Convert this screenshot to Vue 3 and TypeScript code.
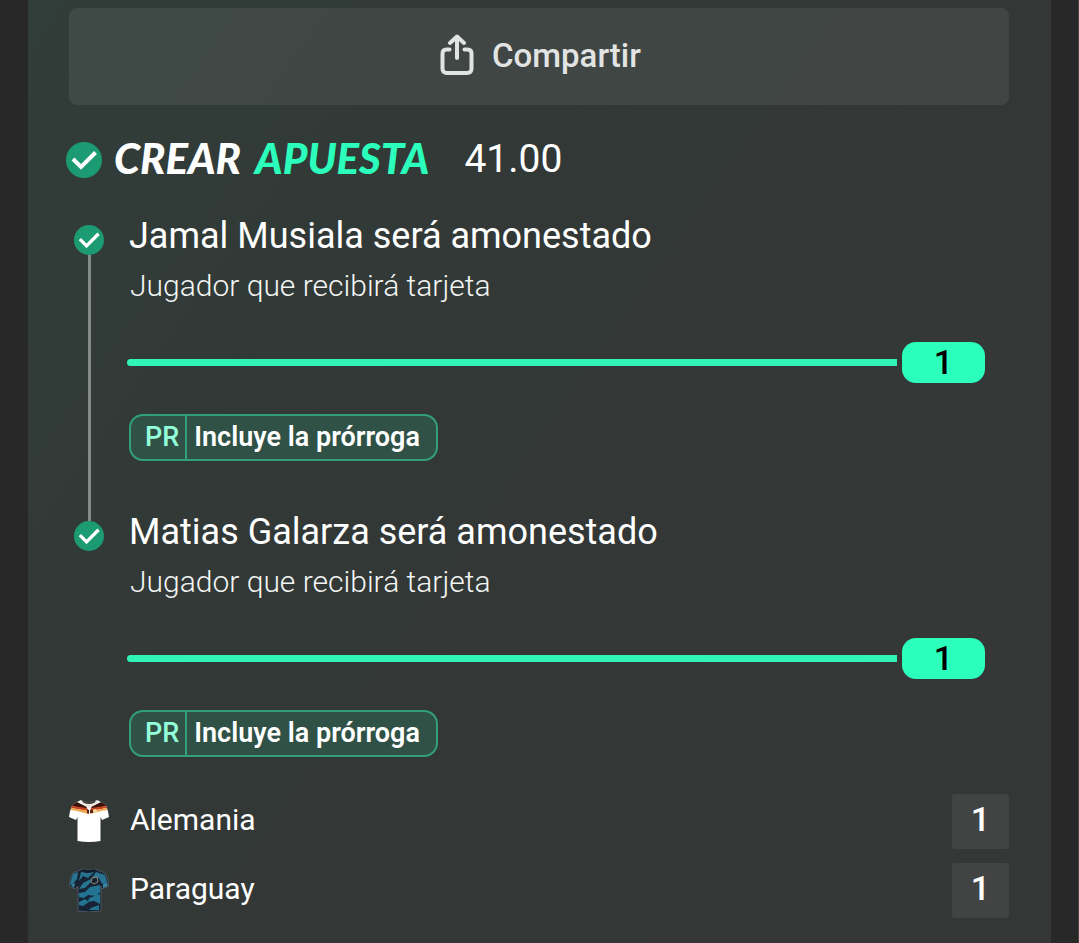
<script setup lang="ts">
interface Leg {
  title: string
  market: string
  count: number
}
interface Team {
  name: string
  score: number
  kit: 'home' | 'away'
}

const odds = '41.00'
const legs: Leg[] = [
  { title: 'Jamal Musiala será amonestado', market: 'Jugador que recibirá tarjeta', count: 1 },
  { title: 'Matias Galarza será amonestado', market: 'Jugador que recibirá tarjeta', count: 1 },
]
const teams: Team[] = [
  { name: 'Alemania', score: 1, kit: 'home' },
  { name: 'Paraguay', score: 1, kit: 'away' },
]
</script>

<template>
  <div class="page">
    <main class="card">
      <button class="share" type="button">
        <svg class="share-icon" viewBox="0 0 34 42" aria-hidden="true">
          <path d="M9.500 15.500H6.500Q2.500 15.500 2.500 19.500V34.500Q2.500 39 7 39H27Q31.500 39 31.500 34.500V19.500Q31.500 15.500 27.500 15.500H24.500" />
          <path d="M17 24V3.500M10 9L17 2.500L24 9" />
        </svg>
        <span>Compartir</span>
      </button>

      <header class="builder">
        <svg class="tick" viewBox="0 0 36 36" aria-hidden="true">
          <circle cx="18" cy="18" r="18" />
          <path d="M7 17L15 25L29.500 10.500" />
        </svg>
        <h1 class="logo">CREAR <span>APUESTA</span></h1>
        <span class="odds">{{ odds }}</span>
      </header>

      <ol class="legs">
        <li v-for="leg in legs" :key="leg.title" class="leg">
          <div class="rail">
            <i class="rail-top"></i>
            <svg class="tick small" viewBox="0 0 36 36" aria-hidden="true">
              <circle cx="18" cy="18" r="18" />
              <path d="M7 17L15 25L29.500 10.500" />
            </svg>
            <i class="rail-rest"></i>
          </div>
          <div class="body">
            <h2>{{ leg.title }}</h2>
            <p class="market">{{ leg.market }}</p>
            <div class="progress">
              <div class="bar"></div>
              <span class="count">{{ leg.count }}</span>
            </div>
            <div class="chip">
              <span class="code">PR</span>
              <span class="label">Incluye la prórroga</span>
            </div>
          </div>
        </li>
      </ol>

      <ul class="teams">
        <li v-for="team in teams" :key="team.name">
          <svg v-if="team.kit === 'home'" class="kit" viewBox="0 0 40 44" aria-hidden="true">
            <path d="M12 1Q20 5 28 1L36 5Q39 10 40 18L33 21L31.500 18V42Q20 44 8.500 42V18L7 21L0 18Q1 10 4 5Z" fill="#fff" />
            <path d="M8 3L18 8L17 10L3 7L4 5ZM32 3L22 8L23 10L37 7L36 5Z" fill="#3a130e" />
            <path d="M3 7L18 9L19 12L2 9ZM37 7L22 9L21 12L38 9Z" fill="#c9431f" />
            <path d="M2 9L19 12V15L8 12L2 11ZM38 9L21 12V15L32 12L38 11Z" fill="#f0a84f" />
            <path d="M10 2L15 3H25L30 2L25 6L20 9L15 6Z" fill="#f3e3d8" />
            <path d="M18 10L20 11V15L18 14ZM21 11H24V14H21Z" fill="#5b2418" />
            <circle cx="26" cy="12" r="2" fill="#f7d8a0" />
            <path d="M12 1Q20 4 28 1L25 4Q20 6 15 4Z" fill="#3a3b3b" />
          </svg>
          <svg v-else class="kit" viewBox="0 0 40 44" aria-hidden="true">
            <path d="M13 1Q20 3 26 1L36 5Q39 10 40 18L33 21L32 18V43Q20 45 9 43V18L6 21L0 18Q1 10 4 5Z" fill="#172334" stroke="#4b5962" stroke-width="1" />
            <path d="M4 6L9 4L8 11L3 17L1 16ZM12 4L18 5L25 4L19 10L14 8L10 13ZM27 4L36 7L38 14L33 16L30 10L22 14L16 20L10 21L14 15L22 11Z" fill="#287490" />
            <path d="M10 25L16 24L21 19L31 17V24L27 28L19 27L15 30L10 29ZM20 30L31 26V36L25 33L19 34ZM10 34L16 31L20 34L14 38L10 37ZM22 40L30 37V42H20Z" fill="#237492" />
            <path d="M34 16L38 14L39 18L34 20ZM2 17L6 15L5 20Z" fill="#3785a0" />
            <path d="M23 10L28 9L29 14L25 16L22 14Z" fill="#17222e" stroke="#94877d" stroke-width="1" />
            <path d="M13 1Q20 3 26 1L24 4Q19 5 15 4Z" fill="#121b26" />
          </svg>
          <span class="team">{{ team.name }}</span>
          <span class="score">{{ team.score }}</span>
        </li>
      </ul>
    </main>
  </div>
</template>

<style>
body {
  margin: 0;
  background: #282828;
}
</style>

<style scoped>
.page {
  box-sizing: border-box;
  min-height: 100vh;
  display: flex;
  padding: 0 27px 0 28px;
  border-right: 1px solid #444;
  background: #282828;
  color: #fff;
  font-family: Roboto, "Liberation Sans", sans-serif;
}
.card {
  flex: 1;
  min-width: 0;
  padding: 8px 42px 25px 41px;
  background: linear-gradient(125deg, #313d39 0%, #323836 40%, #353736 100%);
}
h1, h2, p, ol, ul {
  margin: 0;
  padding: 0;
  list-style: none;
}
.share {
  display: flex;
  align-items: center;
  justify-content: center;
  gap: 18px;
  width: 100%;
  height: 97px;
  padding: 0 0 2px 3px;
  border: 0;
  border-radius: 8px;
  background: rgba(255, 255, 255, 0.07);
  color: #e2e4e3;
  font: 500 33px/40px Roboto, "Liberation Sans", sans-serif;
}
.share-icon {
  width: 34px;
  height: 42px;
  padding-bottom: 2px;
  fill: none;
  stroke: #e2e4e3;
  stroke-width: 4;
  stroke-linecap: round;
  stroke-linejoin: round;
}
.builder {
  display: flex;
  align-items: center;
  height: 44px;
  margin: 33px 0 33px -3px;
}
.tick {
  flex: none;
  width: 36px;
  height: 36px;
}
.tick circle {
  fill: #1c9b72;
}
.tick path {
  fill: none;
  stroke: #fff;
  stroke-width: 4;
}
.tick.small {
  width: 30px;
  height: 30px;
}
.logo {
  display: flex;
  gap: 14px;
  margin: 0 35px 0 12px;
  padding-bottom: 4px;
  font: italic 900 42px/44px Lato, "Open Sans", sans-serif;
  white-space: nowrap;
}
.logo span {
  color: #2bffbb;
}
.odds {
  padding-bottom: 2px;
  font-size: 39px;
  line-height: 44px;
}
.leg {
  display: flex;
  gap: 25px;
}
.rail {
  display: flex;
  flex-direction: column;
  align-items: center;
  flex: none;
  width: 30px;
  margin-left: 5px;
}
.rail-top,
.rail-rest {
  width: 3px;
  background: #848b88;
}
.rail-top {
  height: 10px;
}
.rail-rest {
  flex: 1;
}
.leg:first-child .rail-top,
.leg:last-child .rail-rest {
  background: none;
}
.body {
  flex: 1;
  min-width: 0;
  padding-bottom: 50px;
}
.leg:last-child .body {
  padding-bottom: 37px;
}
h2 {
  font-size: 36px;
  font-weight: 400;
  line-height: 42px;
}
.market {
  margin-top: 9px;
  padding-left: 1px;
  color: #f2f5f4;
  font-size: 30px;
  font-weight: 300;
  line-height: 40px;
}
.progress {
  display: flex;
  align-items: center;
  gap: 5px;
  margin: 36px 24px 31px -2px;
}
.bar {
  flex: 1;
  height: 7px;
  border-radius: 4px 0 0 4px;
  background: #31f5b7;
}
.count {
  width: 83px;
  height: 41px;
  border-radius: 14px;
  background: #2bffbb;
  color: #000;
  font-size: 34px;
  font-weight: 500;
  line-height: 41px;
  text-align: center;
}
.chip {
  display: inline-flex;
  box-sizing: border-box;
  height: 47px;
  border: 2px solid #31a07a;
  border-radius: 14px;
  background: #305146;
  font-size: 27px;
  font-weight: 600;
  line-height: 43px;
  vertical-align: top;
}
.code {
  padding: 0 6px 0 14px;
  border-right: 2px solid #31a07a;
  color: #93ffdb;
  font-weight: 500;
}
.label {
  padding: 0 16px 0 7px;
}
.teams {
  display: grid;
  gap: 14px;
}
.teams li {
  display: flex;
  align-items: center;
  height: 55px;
}
.kit {
  flex: none;
  width: 40px;
  height: 44px;
  padding-bottom: 2px;
}
.team {
  flex: 1;
  margin-left: 21px;
  font-size: 30px;
  line-height: 40px;
  padding-bottom: 4px;
}
.score {
  width: 57px;
  height: 55px;
  border-radius: 3px;
  background: #424443;
  font-size: 34px;
  font-weight: 500;
  line-height: 51px;
  text-align: center;
}
</style>
